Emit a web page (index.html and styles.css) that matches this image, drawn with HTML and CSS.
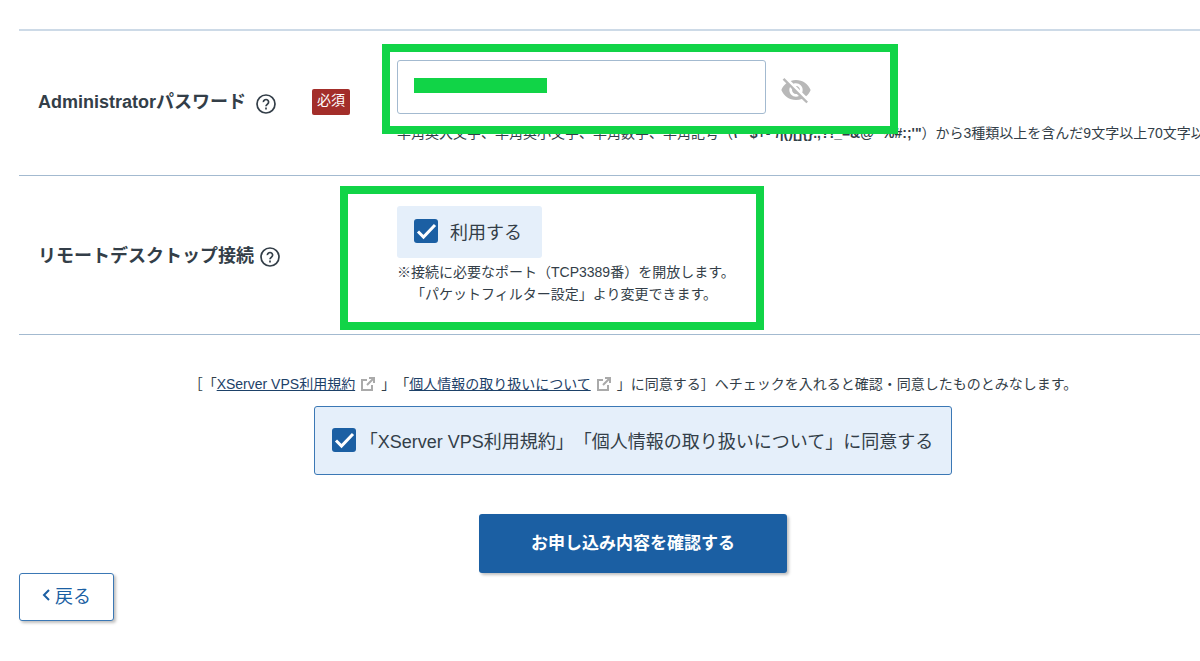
FILE: index.html
```html
<!DOCTYPE html>
<html lang="ja">
<head>
  <meta charset="UTF-8">
  <meta name="viewport" content="width=device-width, initial-scale=1.0">
  <title>お申し込み</title>
  <link rel="stylesheet" href="styles.css">
</head>
<body>
  <form class="order-form">
    <div class="row">
      <div class="row-head">
        <label class="row-title" for="password">Administratorパスワード</label>
        <button type="button" class="help" aria-label="ヘルプ">
          <svg viewBox="0 0 20 20" width="20" height="20"><circle cx="10" cy="10" r="9"/><path d="M7.4 8.1a2.6 2.5 0 1 1 4.3 1.8c-.9.8-1.7 1.2-1.7 2.4"/><path d="M10 13.6v1.8"/></svg>
        </button>
        <span class="required">必須</span>
      </div>
      <div class="row-body">
        <div class="password">
          <input type="text" class="password-input" id="password">
          <span class="password-mask"></span>
          <button type="button" class="toggle" aria-label="パスワードを表示">
            <svg viewBox="0 0 24 24" width="32" height="32"><path d="M12 7c2.76 0 5 2.24 5 5 0 .65-.13 1.26-.36 1.83l2.92 2.92c1.51-1.26 2.7-2.89 3.43-4.75-1.73-4.39-6-7.5-11-7.5-1.4 0-2.74.25-3.98.7l2.16 2.16C10.74 7.13 11.35 7 12 7zM2 4.27l2.28 2.28.46.46C3.08 8.3 1.78 10.02 1 12c1.73 4.39 6 7.5 11 7.5 1.55 0 3.03-.3 4.38-.84l.42.42L19.73 22 21 20.73 3.27 3 2 4.27zM7.53 9.8l1.55 1.55c-.05.21-.08.43-.08.65 0 1.66 1.34 3 3 3 .22 0 .44-.03.65-.08l1.55 1.55c-.67.33-1.41.53-2.2.53-2.76 0-5-2.24-5-5 0-.79.2-1.53.53-2.2zm4.31-.78l3.15 3.15.02-.16c0-1.66-1.34-3-3-3l-.17.01z"/></svg>
          </button>
        </div>
        <p class="note nowrap">半角英大文字、半角英小文字、半角数字、半角記号（<b>\`^$+-*/|()[]{}.,?!_=&amp;@~%#:;'"</b>）から3種類以上を含んだ9文字以上70文字以内</p>
        <span class="highlight highlight-password"></span>
      </div>
    </div>

    <div class="row row-remote">
      <div class="row-head">
        <span class="row-title">リモートデスクトップ接続</span>
        <button type="button" class="help" aria-label="ヘルプ">
          <svg viewBox="0 0 20 20" width="20" height="20"><circle cx="10" cy="10" r="9"/><path d="M7.4 8.1a2.6 2.5 0 1 1 4.3 1.8c-.9.8-1.7 1.2-1.7 2.4"/><path d="M10 13.6v1.8"/></svg>
        </button>
      </div>
      <div class="row-body">
        <label class="check"><input type="checkbox" checked>利用する</label>
        <p class="note">※接続に必要なポート（TCP3389番）を開放します。<br><span class="indent">「パケットフィルター設定」より変更できます。</span></p>
        <span class="highlight highlight-remote"></span>
      </div>
    </div>

    <div class="agreement">
      <p class="note">［「<a href="#">XServer VPS利用規約</a><svg class="external" viewBox="0 0 14 14" width="14" height="14"><path d="M6 3H1v10h10V8"/><path d="M8 1h5v5M13 1L6 8"/></svg>」「<a href="#">個人情報の取り扱いについて</a><svg class="external" viewBox="0 0 14 14" width="14" height="14"><path d="M6 3H1v10h10V8"/><path d="M8 1h5v5M13 1L6 8"/></svg>」に同意する］へチェックを入れると確認・同意したものとみなします。</p>
      <label class="check check-agree"><input type="checkbox" checked>「XServer VPS利用規約」「個人情報の取り扱いについて」に同意する</label>
      <button type="submit" class="submit">お申し込み内容を確認する</button>
    </div>

    <button type="button" class="back">
      <svg viewBox="0 0 8 12" width="8" height="12"><path d="M7 1L2 6l5 5"/></svg>戻る
    </button>
  </form>
</body>
</html>
```
FILE: styles.css
```css
body {
  margin: 0;
  padding-bottom: 32px;
  background-color: #fff;
  color: #333e48;
  font-family: "Liberation Sans", "Noto Sans CJK JP", sans-serif;
  font-size: 18px;
  text-spacing-trim: space-all;
  overflow-x: hidden;
}
button {
  font-family: inherit;
  cursor: pointer;
}
/* the form runs past the right edge of a narrow window */
.order-form {
  margin: 29px -47px 0 19px;
  border-top: 2px solid #cddae7;
}
.row {
  display: flex;
  align-items: center;
  border-bottom: 1px solid #a3bad0;
  padding: 29px 0 31px;
}
.row-remote {
  padding: 30px 0 29px;
}
.row-head {
  display: flex;
  align-items: center;
  flex: none;
  box-sizing: border-box;
  width: 378px;
  padding: 0 47px 0 19px;
}
.row-title {
  font-weight: bold;
  line-height: 26px;
}
.help {
  display: flex;
  margin: 3px 0 0 10px;
  padding: 0;
  border: none;
  background: none;
}
.row-remote .help {
  margin-left: 6px;
}
.help svg {
  fill: none;
  stroke: #333e48;
  stroke-width: 1.7;
}
.required {
  margin-left: auto;
  padding: 0 5px 4px;
  border-radius: 2px;
  background-color: #a32e2a;
  color: #fff;
  font-size: 14px;
  line-height: 22px;
}
.row-body {
  position: relative;
  flex: 1;
  min-width: 0;
}
.password {
  position: relative;
  display: flex;
  align-items: center;
  gap: 14px;
}
.password-input {
  box-sizing: border-box;
  width: 369px;
  height: 54px;
  padding: 0 16px;
  border: 1px solid #a3bad0;
  border-radius: 3px;
  font-size: 18px;
}
.password-mask {
  position: absolute;
  top: 18px;
  left: 17px;
  width: 133px;
  height: 15px;
  background-color: #11d447;
}
.toggle {
  display: flex;
  margin-top: 5px;
  padding: 0;
  border: none;
  background: none;
}
.toggle svg {
  fill: #b8b8b8;
}
.note {
  margin: 0;
  font-size: 14px;
  line-height: 22px;
}
.nowrap {
  margin-top: 8px;
  white-space: nowrap;
}
.indent {
  padding-left: 14px;
}
.highlight {
  position: absolute;
  box-sizing: border-box;
  border: 8px solid #11d447;
  pointer-events: none;
}
.highlight-password {
  top: -16px;
  left: -15px;
  width: 516px;
  height: 90px;
}
.highlight-remote {
  top: -20px;
  left: -57px;
  width: 424px;
  height: 144px;
}
.check {
  display: inline-flex;
  align-items: center;
  gap: 12px;
  box-sizing: border-box;
  height: 52px;
  margin-bottom: 3px;
  padding: 0 20px 2px 17px;
  border-radius: 3px;
  background-color: #e5effa;
}
.check input {
  appearance: none;
  width: 24px;
  height: 24px;
  margin: 0;
  border-radius: 3px;
  background: #1b5fa3 url("data:image/svg+xml,%3Csvg xmlns='http://www.w3.org/2000/svg' viewBox='0 0 24 24'%3E%3Cpath d='M4 12.5l5.5 5.5L21 6' fill='none' stroke='%23fff' stroke-width='3'/%3E%3C/svg%3E");
}
.agreement {
  display: flex;
  flex-direction: column;
  align-items: center;
  padding-top: 38px;
}
.agreement a {
  color: #1d4168;
}
.external {
  margin: 0 6px;
  vertical-align: -2px;
  fill: none;
  stroke: #aaa;
  stroke-width: 2;
}
.check-agree {
  gap: 4px;
  height: 69px;
  margin: 11px 0 39px;
  border: 1px solid #3b78b5;
  padding: 0 18px 2px 17px;
}
.submit {
  width: 308px;
  height: 59px;
  padding: 0 0 4px;
  border: none;
  border-radius: 3px;
  background-color: #1b5fa3;
  box-shadow: 2px 2px 3px rgba(0, 0, 0, 0.25);
  color: #fff;
  font-size: 17px;
  font-weight: bold;
}
.back {
  display: flex;
  align-items: center;
  justify-content: center;
  gap: 5px;
  box-sizing: border-box;
  width: 95px;
  height: 48px;
  padding: 0 0 4px;
  border: 1px solid #3b78b5;
  border-radius: 3px;
  background-color: #fff;
  box-shadow: 2px 2px 3px rgba(0, 0, 0, 0.25);
  color: #1b5fa3;
  font-size: 18px;
}
.back svg {
  fill: none;
  stroke: #1b5fa3;
  stroke-width: 2;
}
```
